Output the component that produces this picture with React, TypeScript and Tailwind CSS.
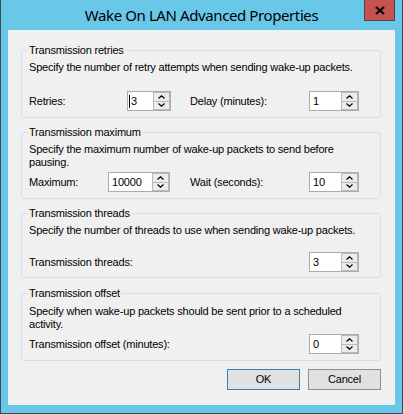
import React from "react";

const font = { fontFamily: '"Liberation Sans", Arial, sans-serif' };

function Arrow({ up }: { up?: boolean }) {
  return (
    <svg width="7" height="4" viewBox="0 0 7 4" className="block">
      {up ? (
        <path d="M0.5 3.5 L3.5 0.8 L6.5 3.5" fill="none" stroke="#000" strokeWidth="1.2" />
      ) : (
        <path d="M0.5 0.5 L3.5 3.2 L6.5 0.5" fill="none" stroke="#000" strokeWidth="1.2" />
      )}
    </svg>
  );
}

function Spin({ value, width, caret }: { value: string; width: string; caret?: boolean }) {
  return (
    <div className={`flex h-[20px] border border-[#acacac] bg-white ${width}`}>
      <div className="flex flex-1 items-center pl-[1px] text-[11px] leading-[13px] text-black">
        {caret && <span className="mr-[1px] h-[13px] w-[1px] bg-black" />}
        <span className={caret ? "" : "pl-[2px]"}>{value}</span>
      </div>
      <div className="flex w-[17px] flex-col gap-[1px] bg-[#b9b9b9] p-[1px]">
        <div className="flex flex-1 items-center justify-center bg-[#ececec]">
          <Arrow up />
        </div>
        <div className="flex flex-1 items-center justify-center bg-[#ececec]">
          <Arrow />
        </div>
      </div>
    </div>
  );
}

function Group({
  title,
  height,
  className,
  children,
}: {
  title: string;
  height: string;
  className?: string;
  children: React.ReactNode;
}) {
  return (
    <div className={`relative rounded-[3px] border border-[#d5dfe5] ${height} ${className ?? ""}`}>
      <span className="absolute -top-[7px] left-[6px] bg-[#f0f0f0] px-[1px] text-[11px] leading-[13px] text-black">
        {title}
      </span>
      {children}
    </div>
  );
}

export default function App() {
  return (
    <div
      className="flex h-[414px] w-[403px] flex-col border-x border-b border-[#3c4a52] bg-[#69c8e8]"
      style={font}
    >
      {/* title bar */}
      <div className="relative flex h-[30px] items-center justify-center">
        <span
          className="text-[15px] tracking-[-0.4px] text-black"
          style={{ fontFamily: '"Noto Sans", "Open Sans", sans-serif' }}
        >
          Wake On LAN Advanced Properties
        </span>
        <div className="absolute right-[7px] top-0 flex h-[21px] w-[31px] items-center justify-center border-x border-b border-[#474747] bg-[#c75050]">
          <svg width="10" height="9" viewBox="0 0 10 9">
            <path d="M1 1 L9 8 M9 1 L1 8" stroke="#000" strokeWidth="2.2" />
          </svg>
        </div>
      </div>

      {/* client area */}
      <div className="mx-[7px] mb-[8px] flex flex-1 flex-col bg-[#f0f0f0] pl-[13px] pr-[14px] pt-[20px] text-[11px] leading-[13px] tracking-[-0.2px] text-black">
        <Group title="Transmission retries" height="h-[68px]">
          <div className="px-[7px] pt-[10px]">
            <p>Specify the number of retry attempts when sending wake-up packets.</p>
            <div className="mt-[17px] flex h-[20px] items-center">
              <span className="w-[98px]">Retries:</span>
              <Spin value="3" width="w-[44px]" caret />
              <span className="ml-[19px] w-[119px]">Delay (minutes):</span>
              <Spin value="1" width="w-[50px]" />
            </div>
          </div>
        </Group>

        <Group title="Transmission maximum" height="h-[67px]" className="mt-[14px]">
          <div className="px-[7px] pt-[10px]">
            <p className="w-[325px]">
              Specify the maximum number of wake-up packets to send before pausing.
            </p>
            <div className="mt-[3px] flex h-[20px] items-center">
              <span className="w-[79px]">Maximum:</span>
              <Spin value="10000" width="w-[62px]" />
              <span className="ml-[20px] w-[119px]">Wait (seconds):</span>
              <Spin value="10" width="w-[50px]" />
            </div>
          </div>
        </Group>

        <Group title="Transmission threads" height="h-[65px]" className="mt-[14px]">
          <div className="px-[7px] pt-[10px]">
            <p>Specify the number of threads to use when sending wake-up packets.</p>
            <div className="mt-[15px] flex h-[20px] items-center">
              <span className="w-[280px]">Transmission threads:</span>
              <Spin value="3" width="w-[50px]" />
            </div>
          </div>
        </Group>

        <Group title="Transmission offset" height="h-[68px]" className="mt-[15px]">
          <div className="px-[7px] pt-[11px]">
            <p className="w-[325px]">
              Specify when wake-up packets should be sent prior to a scheduled activity.
            </p>
            <div className="mt-[3px] flex h-[20px] items-center">
              <span className="w-[280px]">Transmission offset (minutes):</span>
              <Spin value="0" width="w-[50px]" />
            </div>
          </div>
        </Group>

        <div className="mt-[8px] flex justify-end gap-[8px]">
          <button className="h-[21px] w-[73px] border border-[#3c7fb1] bg-[#e1e1e1] text-[11px] text-black">
            OK
          </button>
          <button className="h-[21px] w-[73px] border border-[#8f8f8f] bg-[#e1e1e1] text-[11px] text-black">
            Cancel
          </button>
        </div>
      </div>
    </div>
  );
}
